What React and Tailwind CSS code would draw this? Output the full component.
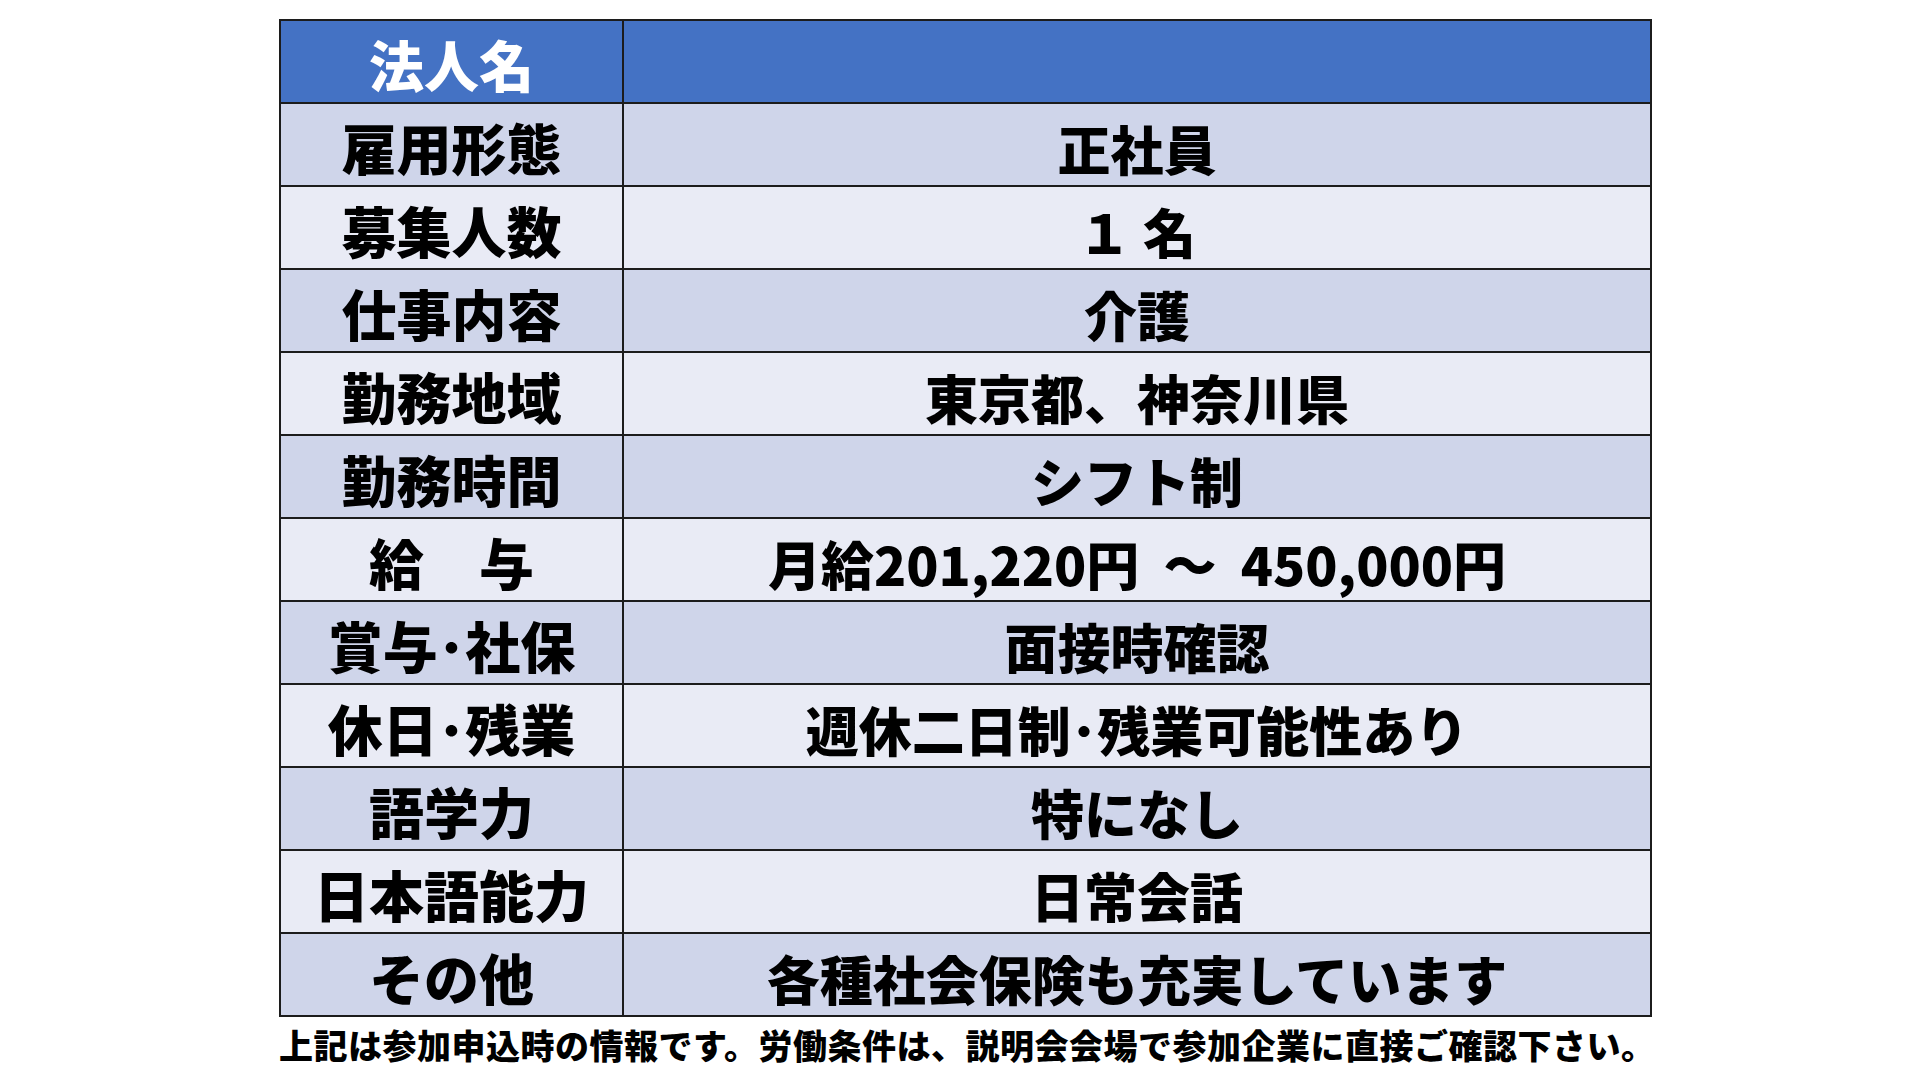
import React from 'react';

const rows = [
  ['雇用形態', '正社員'],
  ['募集人数', '１ 名'],
  ['仕事内容', '介護'],
  ['勤務地域', '東京都、神奈川県'],
  ['勤務時間', 'シフト制'],
  ['給　与', '月給201,220円  ～  450,000円'],
  ['賞与･社保', '面接時確認'],
  ['休日･残業', '週休二日制･残業可能性あり'],
  ['語学力', '特になし'],
  ['日本語能力', '日常会話'],
  ['その他', '各種社会保険も充実しています'],
];

const App = () => {
  return (
    <div
      className="w-[1920px] h-[1080px] bg-white pl-[279px] pt-[19px] overflow-hidden"
      style={{ fontFamily: '"Noto Sans CJK JP", "Noto Sans", sans-serif' }}
    >
      <table className="border-collapse w-[1373px] table-fixed">
        <colgroup>
          <col className="w-[343px]" />
          <col />
        </colgroup>
        <tbody>
          {/* header row */}
          <tr className="h-[83px] bg-[#4472c4]">
            <td className="border-2 border-[#1c1c1c] text-center text-white font-black text-[55px] leading-none pt-[4px]">
              法人名
            </td>
            <td className="border-2 border-[#1c1c1c]" />
          </tr>
          {rows.map(([label, value], i) => (
            <tr
              key={label}
              className={i % 2 === 0 ? 'h-[83px] bg-[#cfd5ea]' : 'h-[83px] bg-[#e9ebf5]'}
            >
              <td className="border-2 border-[#1c1c1c] text-center text-black font-black text-[55px] leading-none pt-[4px] whitespace-pre">
                {label}
              </td>
              <td className="border-2 border-[#1c1c1c] text-center text-black font-black text-[53px] leading-none pt-[8px] whitespace-pre">
                {value}
              </td>
            </tr>
          ))}
        </tbody>
      </table>
      <p className="mt-[11px] text-[34px] leading-none font-black text-black whitespace-nowrap tracking-[0.5px]">
        上記は参加申込時の情報です。労働条件は、説明会会場で参加企業に直接ご確認下さい。
      </p>
    </div>
  );
};

export default App;
